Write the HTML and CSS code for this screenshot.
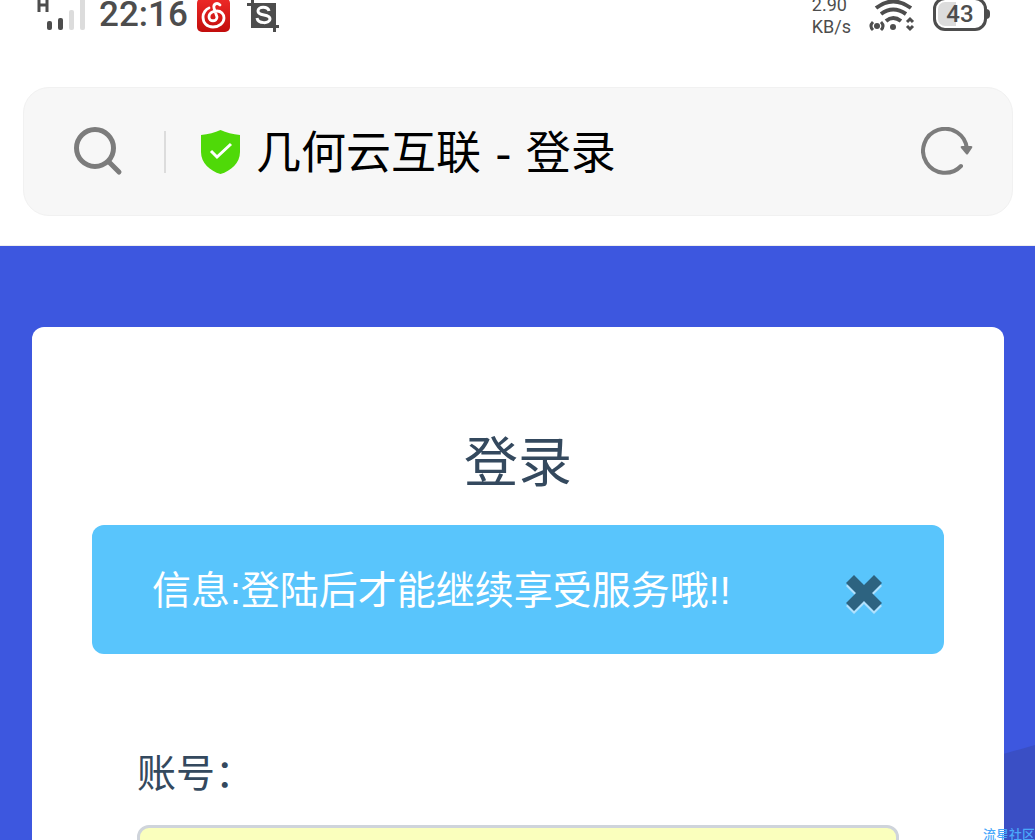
FILE: index.html
```html
<!doctype html>
<html lang="zh-CN">
<head>
  <meta charset="UTF-8">
  <meta name="viewport" content="width=device-width, initial-scale=1">
  <title>几何云互联 - 登录</title>
  <link rel="stylesheet" href="styles.css">
</head>
<body>
  <div class="status">
    <svg class="signal" width="50" height="32" viewBox="0 0 50 32">
      <path d="M2 0v12M10 0v12M2 5h8" fill="none" stroke="#4d4d4d" stroke-width="3"/>
      <rect x="10" y="21" width="5" height="9" rx="2" fill="#4d4d4d"/>
      <rect x="21" y="18" width="5" height="12" rx="2" fill="#4d4d4d"/>
      <rect x="32" y="10" width="5" height="20" rx="2" fill="#dcdcdc"/>
      <rect x="43" y="-3" width="5" height="33" rx="2" fill="#dcdcdc"/>
    </svg>
    <span class="time">22:16</span>
    <svg class="music" width="33" height="32" viewBox="0 0 33 32">
      <defs>
        <linearGradient id="red" x1="0" y1="0" x2="0" y2="1">
          <stop offset="0" stop-color="#ee2a28"/>
          <stop offset="1" stop-color="#c20d0c"/>
        </linearGradient>
      </defs>
      <rect y="-2" width="33" height="34" rx="5" fill="url(#red)"/>
      <path d="M23 5C20 2 16 4 17 8l3 9c0 5-8 5-8 0 0-4 4-6 8-6 4 0 7 3 7 7 0 5-5 9-11 9S6 23 6 17c0-4 3-8 6-9" fill="none" stroke="#fff" stroke-width="2.8" stroke-linecap="round"/>
    </svg>
    <svg class="crop" width="34" height="32" viewBox="0 0 34 32">
      <path d="M4 3h25v25H4z" fill="#4d4d4d"/>
      <path d="M0 4.500h6M5.500 0v6M26 26.500h6M27.500 24v8" stroke="#4d4d4d" stroke-width="3"/>
      <path d="M22 11c-1-5-11-5-11 0 0 6 12 2 12 8 0 5-12 5-13-1" fill="none" stroke="#fff" stroke-width="3"/>
    </svg>
    <span class="speed">2.90<br>KB/s</span>
    <svg class="wifi" width="46" height="32" viewBox="0 0 46 32">
      <g fill="none" stroke="#4d4d4d">
        <path d="M7 8q17-13 35 0M12 14q12-9 25 0M17 21q7-6 15 0" stroke-width="4"/>
        <path d="M4 22q-4 4 0 8M12 22q4 4 0 8M38 22l3-3 3 3M38 26l3 3 3-3" stroke-width="3"/>
      </g>
      <circle cx="8" cy="26" r="3" fill="#4d4d4d"/>
      <circle cx="24" cy="27" r="3" fill="#4d4d4d"/>
    </svg>
    <span class="battery">43</span>
  </div>

  <header class="topbar">
    <div class="address">
      <button class="icon-btn" type="button" aria-label="搜索">
        <svg width="50" height="50" viewBox="0 0 50 50" fill="none" stroke="#7c7c7c" stroke-width="5" stroke-linecap="round">
          <circle cx="21" cy="21" r="18.500"/>
          <path d="M35 35l10 10"/>
        </svg>
      </button>
      <span class="divider"></span>
      <svg class="shield" width="39" height="44" viewBox="0 0 39 44">
        <path d="M19.500 0Q28 4 39 5v17c0 11-9 19-19.500 22C9 41 0 33 0 22V5Q11 4 19.500 0z" fill="#4fd908"/>
        <path d="M10 21l6 6 14-13" fill="none" stroke="#fff" stroke-width="3"/>
      </svg>
      <span class="site">几何云互联 - 登录</span>
      <button class="icon-btn" type="button" aria-label="刷新">
        <svg width="52" height="50" viewBox="0 0 52 50">
          <path d="M46 22A22 22 0 1 0 40 39" fill="none" stroke="#7c7c7c" stroke-width="4" stroke-linecap="round"/>
          <path d="M41 19h9q2 0 1 2l-4 6q-1 1-2 0l-5-6q-1-2 1-2z" fill="#7c7c7c"/>
        </svg>
      </button>
    </div>
  </header>

  <main class="page">
    <svg class="shade" width="200" height="95" viewBox="0 0 200 95" aria-hidden="true">
      <path d="M0 57L200 0v95H0z" fill="#3a4fc5"/>
    </svg>
    <form class="card">
      <h1 class="title">登录</h1>
      <div class="alert" role="alert">
        <span>信息:登陆后才能继续享受服务哦!!</span>
        <button class="close" type="button" aria-label="关闭">
          <svg width="38" height="40" viewBox="0 0 38 40">
            <path d="M9 3l10 10L29 3l8 8-10 10 10 10-8 8-10-10L9 39l-8-8 10-10L1 11z" fill="#b1e1fd"/>
            <path d="M9 0l10 10L29 0l8 8-10 10 10 10-8 8-10-10L9 36l-8-8 10-10L1 8z" fill="#2d6380"/>
          </svg>
        </button>
      </div>
      <div class="field">
        <label for="user">账号：</label>
        <input id="user" type="text" name="user">
      </div>
    </form>
  </main>
  <span class="mark">流星社区</span>
</body>
</html>
```

FILE: styles.css
```css
*{margin:0;
  padding:0;
  box-sizing:border-box;}
body{height:100vh;
     overflow:hidden;
     position:relative;
     display:flex;
     flex-direction:column;
     background:#fff;
     font-family:"Liberation Sans","Noto Sans CJK SC",sans-serif;}
button{border:0;
       background:none;
       cursor:pointer;}
svg{display:block;
    flex:none;}

/* 状态栏 */
.status{display:flex;
        flex:none;
        align-items:flex-start;
        height:32px;
        padding:0 48px 0 37px;
        color:#4d4d4d;
        font-family:"Roboto",sans-serif;}
.time{width:86px;
      margin-left:12px;
      font-size:35px;
      font-weight:500;
      line-height:30px;}
.music{margin-left:12px;}
.crop{margin-left:17px;}
.speed{margin-left:auto;
       font-size:18px;
       line-height:22px;
       margin-top:-6px;}
.wifi{margin-left:18px;}
.battery{position:relative;
         width:54px;
         height:34px;
         margin:-3px 0 0 18px;
         border:3px solid #4d4d4d;
         border-radius:12px;
         background:linear-gradient(to right,#dcdcdc 18px,#fff 18px) content-box;
         padding:2px;
         font-size:24px;
         font-weight:500;
         line-height:24px;
         text-align:center;}
.battery:after{content:"";
               position:absolute;
               right:-6px;
               top:9px;
               width:4px;
               height:10px;
               border-radius:0 4px 4px 0;
               background:#4d4d4d;}

/* 地址栏 */
.topbar{flex:none;
        padding:55px 22px 29px 23px;
        border-bottom:1px solid #eee;}
.address{display:flex;
         align-items:center;
         height:129px;
         padding:0 39px 0 50px;
         border:1px solid #f1f1f1;
         border-radius:26px;
         background:#f7f7f7;}
.divider{width:2px;
         height:42px;
         margin:0 35px 0 40px;
         background:#dcdcdc;}
.site{flex:1;
      margin-left:16px;
      padding-top:4px;
      font-family:"DejaVu Sans","Noto Sans CJK SC",sans-serif;
      font-size:45px;
      line-height:60px;
      color:#000;
      white-space:nowrap;}

/* 登录 */
.page{position:relative;
      flex:1;
      min-height:0;
      overflow:hidden;
      padding:81px 31px 0 32px;
      background:#3d57df;}
.shade{position:absolute;
       right:0;
       bottom:0;}
.card{position:relative;
      height:100%;
      padding:102px 60px 0;
      border-radius:12px 12px 0 0;
      background:#fff;
      color:#34495e;}
.title{font-size:54px;
       font-weight:normal;
       line-height:68px;
       text-align:center;}
.alert{display:flex;
       align-items:center;
       justify-content:space-between;
       margin-top:28px;
       padding:36px 61px 33px 60px;
       border-radius:12px;
       background:#59c5fc;
       color:#fff;
       font-size:39px;
       line-height:60px;}
.close{padding-top:8px;}
.field{padding:90px 45px 0;}
.field label{display:block;
             font-size:39px;
             line-height:60px;}
.field input{display:block;
             width:100%;
             height:100px;
             margin-top:21px;
             padding:0 30px;
             border:3px solid #cfd4db;
             border-radius:12px;
             background:#faffbd;
             font-size:39px;}
.mark{position:absolute;
      right:0;
      bottom:-4px;
      font-size:13px;
      font-weight:500;
      line-height:18px;
      color:#4aa8fa;}
```
